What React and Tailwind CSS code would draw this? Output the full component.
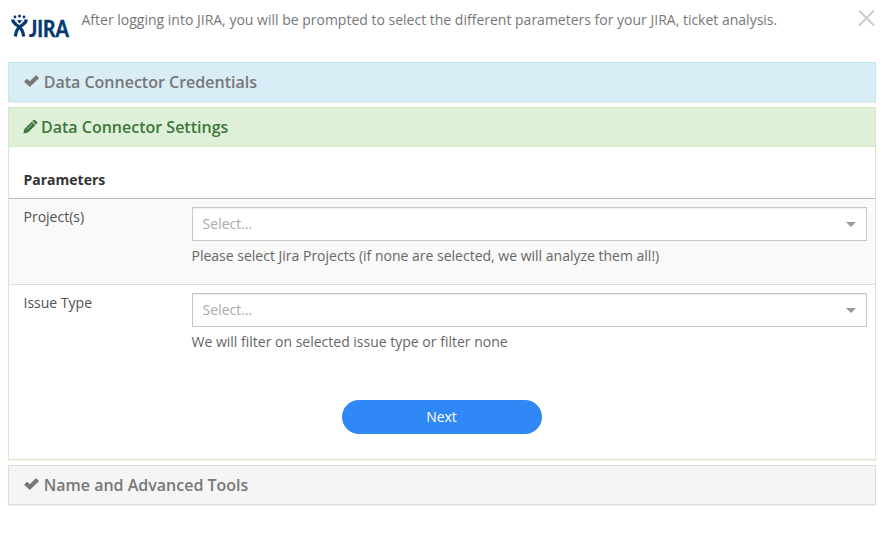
import React from "react";

function OkIcon() {
  return (
    <svg className="mr-[5px] h-4 w-4 shrink-0" viewBox="0 0 16 16" fill="currentColor">
      <path d="M1.6 7.1 L3.7 5.1 Q4.1 4.8 4.5 5.1 L6.8 7.2 L12.6 1.6 Q13.1 1.2 13.6 1.6 L15.6 3.6 Q16 4.1 15.6 4.5 L7.4 12.6 Q6.8 13.1 6.3 12.6 L1.6 8.2 Q1.2 7.6 1.6 7.1 Z" />
    </svg>
  );
}

function PencilIcon() {
  return (
    <svg className="mr-[2.5px] h-4 w-4 shrink-0" viewBox="0 0 16 16" fill="currentColor">
      <path d="M10.4 1 Q11.2 .3 12 1 L14 3 Q14.7 3.8 14 4.6 L12.9 5.7 L9.3 2.1 Z" />
      <path d="M8.8 2.7 L12.3 6.2 L5 13.4 L0.4 14.5 L1.4 10 Z" />
      <path d="M3.6 10.7 L9.4 5" stroke="#dff0d8" strokeWidth="0.6" />
    </svg>
  );
}

function JiraLogo() {
  return (
    <svg className="h-[40px] w-[62px] shrink-0 overflow-visible leading-none" viewBox="8 6 62 40" fill="#063970">
      <circle cx="15" cy="17" r="1.4" />
      <circle cx="19.5" cy="16" r="1.5" />
      <circle cx="24" cy="17" r="1.4" />
      <g fill="none" stroke="#063970" strokeWidth="3.2">
        <path d="M12.6 19.5 Q13 22.6 16.5 24.8 Q23 28.2 23.7 36.5" />
        <path d="M26.4 19.5 Q26 22.6 22.5 24.8 Q16 28.2 15.3 36.5" />
      </g>
      <path d="M16.8 20.5 Q19.5 19.5 22.2 20.5 L19.5 23.6 Z" />
      <text x="29" y="36.6" fontSize="23" fontWeight="900" stroke="#063970" strokeWidth="0.3" textLength="40" lengthAdjust="spacingAndGlyphs" fontFamily="Lato, sans-serif">JIRA</text>
    </svg>
  );
}

function Select() {
  return (
    <div className="flex h-[34px] items-center justify-between border border-[#c8c8c8] bg-white pr-[10px] pl-[9.6px] text-[#aaa] shadow-[inset_0_1px_1px_rgba(0,0,0,0.075)]">
      <span>Select...</span>
      <span className="border-x-[5px] border-t-[5px] border-x-transparent border-t-[#999]" />
    </div>
  );
}

function Row({ label, help, className }) {
  return (
    <div className={`flex pt-2 pr-2 pl-[14.5px] ${className}`}>
      <div className="w-[168.5px] shrink-0 text-[#505050]">{label}</div>
      <div className="flex-1">
        <Select />
        <p className="-ml-[0.5px] mt-[5px] text-[#666]">{help}</p>
      </div>
    </div>
  );
}

export default function App() {
  return (
    <div className="h-[533px] w-[885px] overflow-hidden bg-white pr-[9px] pl-2 font-['Open_Sans',sans-serif] text-[14px] leading-5">
      <header className="flex h-[62px] items-start">
        <div className="pt-[6px]"><JiraLogo /></div>
        <p className="ml-[11.5px] flex-1 pt-[10px] text-[#777]">
          After logging into JIRA, you will be prompted to select the different parameters for your JIRA, ticket analysis.
        </p>
        <svg className="mt-[9px] h-[18px] w-[18px]" viewBox="0 0 18 18" stroke="#ccc" strokeWidth="2">
          <path d="M1 1.5 L16 16.5 M16 1.5 L1 16.5" />
        </svg>
      </header>

      <section className="flex h-10 items-center border border-[#bce8f1] bg-[#d9edf7] pl-[13.7px] text-[16px] font-semibold text-[#777] shadow-[0_1px_1px_rgba(0,0,0,0.05)]">
        <OkIcon />Data Connector Credentials
      </section>

      <section className="mt-[5px] h-[353px] border border-[#d6e9c6] shadow-[0_1px_1px_rgba(0,0,0,0.05)]">
        <h2 className="flex h-[39px] items-center border-b border-[#d6e9c6] bg-[#dff0d8] pl-[13.5px] text-[16px] font-semibold text-[#3c763d]">
          <PencilIcon />Data Connector Settings
        </h2>
        <div className="h-[52px] border-b border-[#bbb] pt-[23px] pl-[14.5px] font-bold text-[#333]">Parameters</div>
        <Row label="Project(s)" className="h-[85px] bg-[#f9f9f9]" help="Please select Jira Projects (if none are selected, we will analyze them all!)" />
        <Row label="Issue Type" className="h-[86px] border-t border-[#ddd]" help="We will filter on selected issue type or filter none" />
        <button className="mx-auto mt-[30px] block h-[34px] w-[200px] rounded-[17px] bg-[#2f88f5] pr-px text-white">Next</button>
      </section>

      <section className="mt-[5px] flex h-10 items-center border border-[#ddd] bg-[#f5f5f5] pl-[13.7px] text-[16px] font-semibold text-[#777] shadow-[0_1px_1px_rgba(0,0,0,0.05)]">
        <OkIcon />Name and Advanced Tools
      </section>
    </div>
  );
}
